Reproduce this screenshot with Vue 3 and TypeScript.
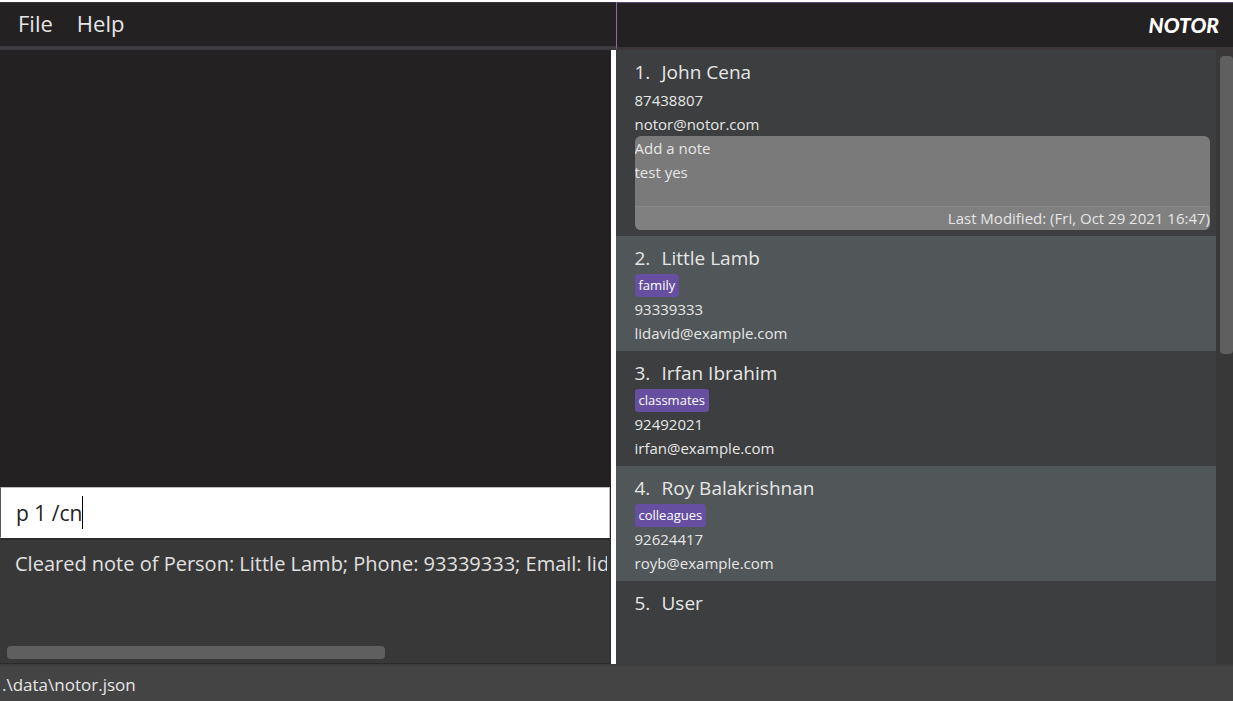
<script setup lang="ts">
import { ref } from 'vue'

interface Note {
  lines: string[]
  modified: string
}

interface Person {
  id: number
  name: string
  tags: string[]
  phone?: string
  email?: string
  note?: Note
}

const command = ref('p 1 /cn')
const result = ref('Cleared note of Person: Little Lamb; Phone: 93339333; Email: lidavid@example.com')

const people: Person[] = [
  {
    id: 1,
    name: 'John Cena',
    tags: [],
    phone: '87438807',
    email: 'notor@notor.com',
    note: { lines: ['Add a note', 'test yes'], modified: 'Last Modified: (Fri, Oct 29 2021 16:47)' },
  },
  { id: 2, name: 'Little Lamb', tags: ['family'], phone: '93339333', email: 'lidavid@example.com' },
  { id: 3, name: 'Irfan Ibrahim', tags: ['classmates'], phone: '92492021', email: 'irfan@example.com' },
  { id: 4, name: 'Roy Balakrishnan', tags: ['colleagues'], phone: '92624417', email: 'royb@example.com' },
  { id: 5, name: 'User', tags: [] },
]
</script>

<template>
  <div class="window">
    <header class="top">
      <nav class="menu">
        <button type="button">File</button>
        <button type="button">Help</button>
      </nav>
      <div class="brand">NOTOR</div>
    </header>

    <main class="split">
      <section class="left">
        <div class="canvas"></div>
        <label class="command">
          <input v-model="command" type="text" aria-label="Command" spellcheck="false" />
          <span class="caret"></span>
        </label>
        <div class="result">
          <textarea v-model="result" aria-label="Result" wrap="off" rows="1" readonly></textarea>
          <div class="track"><div class="thumb"></div></div>
        </div>
      </section>

      <div class="divider"></div>

      <section class="right">
        <ul class="people">
          <li v-for="person in people" :key="person.id" class="person">
            <h2><span class="index">{{ person.id }}.</span>{{ person.name }}</h2>
            <div class="tags">
              <span v-for="tag in person.tags" :key="tag" class="tag">{{ tag }}</span>
            </div>
            <p v-if="person.phone">{{ person.phone }}</p>
            <p v-if="person.email">{{ person.email }}</p>
            <div v-if="person.note" class="note">
              <div class="note-body">
                <p v-for="line in person.note.lines" :key="line">{{ line }}</p>
              </div>
              <p class="modified">{{ person.note.modified }}</p>
            </div>
          </li>
        </ul>
        <div class="rail"><div class="grip"></div></div>
      </section>
    </main>

    <footer class="status">.\data\notor.json</footer>
  </div>
</template>

<style>
body {
  background: #ffffff;
}
</style>

<style scoped>
* {
  box-sizing: border-box;
}

.window {
  display: flex;
  flex-direction: column;
  height: 100vh;
  padding-top: 2px;
  overflow: hidden;
  color: #e6e6e6;
  font-family: "Segoe UI", "Open Sans", "Noto Sans", sans-serif;
}

.top {
  display: flex;
  height: 48px;
  flex: none;
  background: #242122;
}

.menu {
  display: flex;
  flex: 1;
  align-items: center;
  gap: 24px;
  padding: 0 0 3px 18px;
  border-top: 1px solid #3a3240;
  border-bottom: 4px solid #3e3b40;
}

.menu button {
  padding: 0;
  border: 0;
  background: none;
  color: inherit;
  font: inherit;
  font-size: 22px;
  line-height: 28px;
}

.brand {
  display: flex;
  flex: 0 0 calc(50% + 1px);
  align-items: center;
  justify-content: flex-end;
  padding: 0 14px 2px 0;
  border-top: 1px solid #5f4a75;
  border-left: 1px solid #8d6aa8;
  border-bottom: 3px solid #3c3838;
  color: #ffffff;
  font-family: "Forte", "Lato", sans-serif;
  font-size: 21px;
  font-style: italic;
  font-weight: 900;
}

.split {
  display: flex;
  flex: 1;
  min-height: 0;
}

.left {
  display: flex;
  flex: 1;
  flex-direction: column;
  min-width: 0;
  background: #242122;
}

.canvas {
  flex: 1;
}

.command {
  display: flex;
  align-items: center;
  height: 51px;
  margin-right: 1px;
  padding-left: 15px;
  border: 1px solid #bdbdbd;
  border-left-color: #555555;
  border-bottom-color: #ffffff;
  background: #ffffff;
}

.command input {
  field-sizing: content;
  padding: 0;
  border: 0;
  outline: 0;
  background: none;
  color: #242122;
  font: inherit;
  font-size: 21px;
  line-height: 28px;
}

.caret {
  width: 1px;
  height: 33px;
  background: #000000;
}

.result {
  display: flex;
  flex-direction: column;
  height: 126px;
  padding: 10px 3px 4px 7px;
  border: 1px solid #2b2b2b;
  border-top-width: 2px;
  border-left: 0;
  background: #383838;
}

.result textarea {
  flex: 1;
  padding: 0 0 0 8px;
  border: 0;
  outline: 0;
  overflow: hidden;
  resize: none;
  background: none;
  color: #e0e0e0;
  font: inherit;
  font-size: 20px;
  line-height: 28px;
}

.track {
  height: 13px;
}

.thumb {
  width: 63%;
  height: 13px;
  border-radius: 4px;
  background: #5f5f5f;
}

.divider {
  width: 5px;
  background: #ffffff;
}

.right {
  display: flex;
  flex: 0 0 calc(50% + 1px);
  min-width: 0;
  background: #3c3e3f;
}

.people {
  flex: 1;
  margin: 0;
  padding: 0;
  overflow: hidden;
  list-style: none;
}

.person {
  padding: 8px 6px 6px 19px;
}

.person:nth-child(even) {
  background: #515658;
}

h2,
p {
  margin: 0;
  font-weight: 400;
}

h2 {
  font-size: 19px;
  line-height: 28px;
}

.index {
  display: inline-block;
  width: 27px;
}

p {
  font-size: 15px;
  line-height: 24px;
}

.tags {
  display: flex;
  gap: 7px;
  padding-top: 2px;
}

.tag {
  padding: 0 4px;
  border-radius: 3px;
  background: #664ea0;
  color: #ffffff;
  font-size: 13px;
  line-height: 23px;
}

.note {
  overflow: hidden;
  border-radius: 6px;
  background: #7a7a7a;
}

.note-body {
  height: 70px;
}

.modified {
  background: #808080;
  box-shadow: inset 0 1px #888888;
  text-align: right;
}

.rail {
  width: 17px;
  padding: 6px 0 0 4px;
  background: #383838;
}

.grip {
  width: 13px;
  height: 298px;
  border-radius: 4px;
  background: #5f5f5f;
}

.status {
  height: 37px;
  flex: none;
  padding-left: 2px;
  border-top: 2px solid #3c3c3c;
  background: #444444;
  font-size: 17px;
  line-height: 37px;
}
</style>
